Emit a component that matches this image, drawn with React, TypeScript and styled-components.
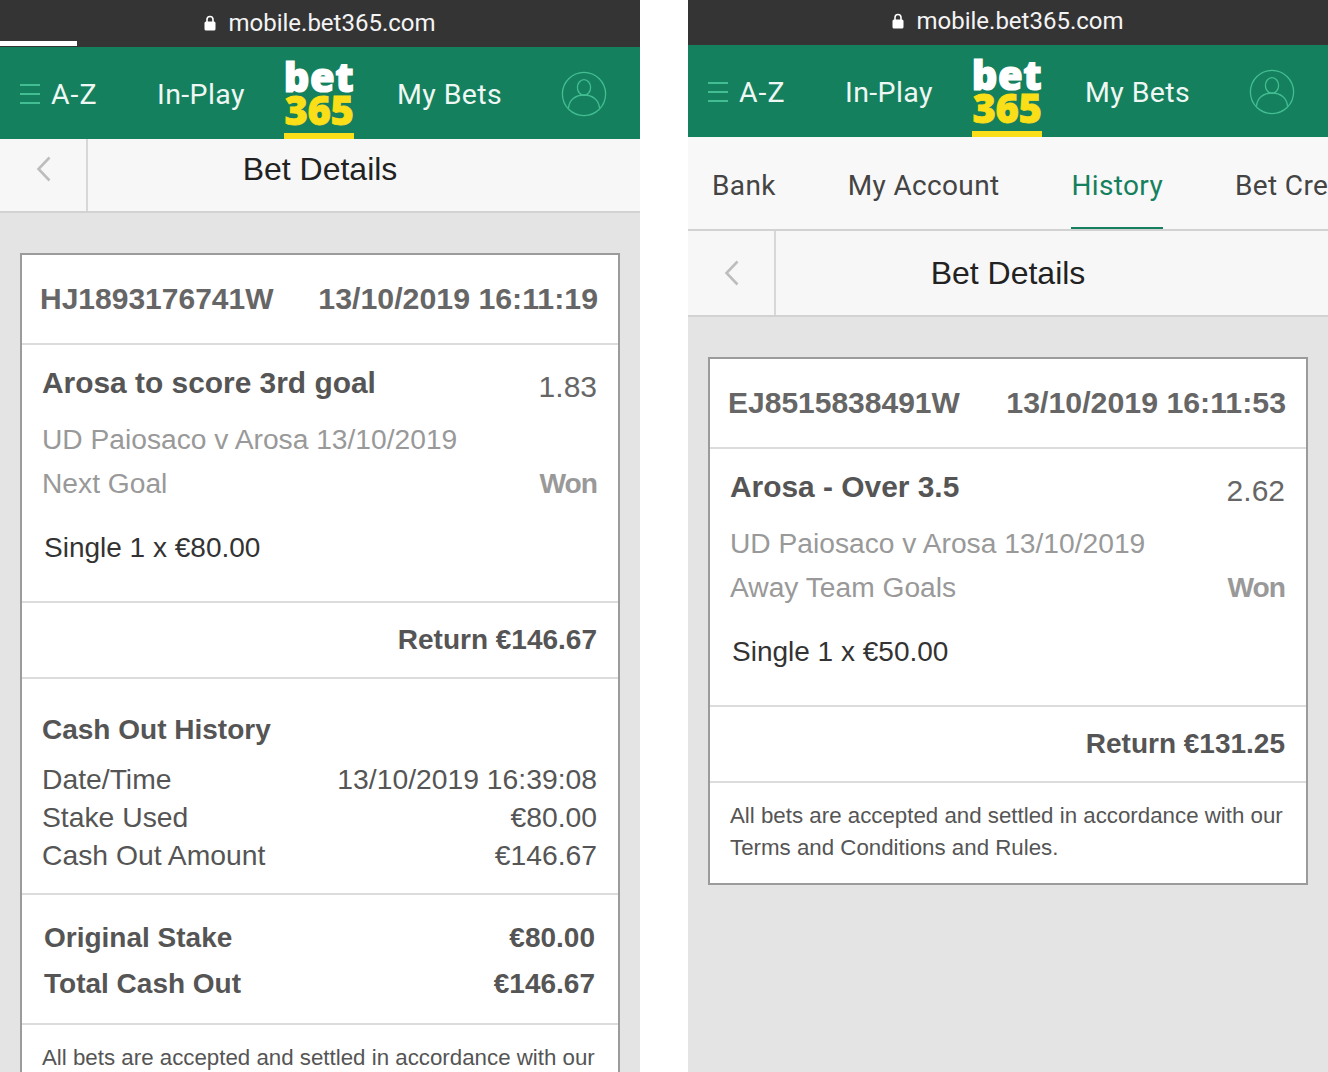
import React from "react"
import styled, { createGlobalStyle } from "styled-components"

const GlobalStyle = createGlobalStyle`
    html, body {
        margin: 0;
        padding: 0;
        background: #ffffff;
    }
    body {
        width: 1328px;
        height: 1072px;
        overflow: hidden;
        font-family: "Liberation Sans", Arial, sans-serif;
    }
`

type Row = { label: string; value: string }

type BetProps = {
    barHeight: number
    progress?: boolean
    tabs?: boolean
    betId: string
    placed: string
    title: string
    odds: string
    market: string
    stake: string
    returned: string
    history?: Row[]
    totals?: Row[]
}

const Lock = () => (
    <svg width="12" height="16" viewBox="0 0 12 16">
        <path d="M3 7V4.500a3 3 0 0 1 6 0V7" fill="none" stroke="#fff" strokeWidth="1.6" />
        <rect x="0.5" y="6.5" width="11" height="9" rx="1.5" fill="#fff" />
    </svg>
)

const Avatar = () => (
    <AvatarIcon width="46" height="46" viewBox="0 0 46 46" fill="none" stroke="#43bd92" strokeWidth="1.3">
        <ellipse cx="23" cy="23" rx="21.6" ry="21.6" />
        <ellipse cx="23" cy="16.5" rx="6.6" ry="7.8" />
        <path d="M7.500 37c.6-8 7-13 15.500-13s14.900 5 15.500 13" />
    </AvatarIcon>
)

const Chevron = () => (
    <svg width="15" height="26" viewBox="0 0 15 26" fill="none" stroke="#bdbdbd" strokeWidth="2.6">
        <path d="M13.500 1.500 2.500 13l11 11.500" />
    </svg>
)

const PhoneView = ({
    barHeight, progress, tabs, betId, placed, title, odds, market, stake, returned, history, totals,
}: BetProps) => {
    return (
        <Phone>
            <UrlBar $height={barHeight} $loading={!!progress}>
                <Lock />
                <UrlText>mobile.bet365.com</UrlText>
                {progress ? <Progress /> : null}
            </UrlBar>
            <Nav>
                <NavAz>
                    <Burger><i /><i /><i /></Burger>
                    A-Z
                </NavAz>
                <NavItem>In-Play</NavItem>
                <Logo>
                    <LogoBet>bet</LogoBet>
                    <LogoNum>365</LogoNum>
                </Logo>
                <NavItem>My Bets</NavItem>
                <Avatar />
            </Nav>
            {tabs ? (
                <Tabs>
                    <Tab>Bank</Tab>
                    <Tab>My Account</Tab>
                    <Tab $active>History</Tab>
                    <Tab>Bet Credits</Tab>
                </Tabs>
            ) : null}
            <SubHead $tall={!!tabs}>
                <BackCell $tall={!!tabs}><Chevron /></BackCell>
                <SubTitle $tall={!!tabs}>Bet Details</SubTitle>
            </SubHead>
            <Card>
                <CardHead>
                    <span>{betId}</span>
                    <PlacedAt>{placed}</PlacedAt>
                </CardHead>
                <Selection>
                    <TitleRow>
                        <BetTitle>{title}</BetTitle>
                        <Odds>{odds}</Odds>
                    </TitleRow>
                    <MatchLine>
                        <span>UD Paiosaco v Arosa 13/10/2019</span>
                    </MatchLine>
                    <MatchLine>
                        <span>{market}</span>
                        <Won>Won</Won>
                    </MatchLine>
                    <Stake>Single 1 x {stake}</Stake>
                </Selection>
                <ReturnRow>Return {returned}</ReturnRow>
                {history ? (
                    <History>
                        <HistoryTitle>Cash Out History</HistoryTitle>
                        {history.map((r) => (
                            <HistoryRow key={r.label}>
                                <span>{r.label}</span>
                                <span>{r.value}</span>
                            </HistoryRow>
                        ))}
                    </History>
                ) : null}
                {totals ? (
                    <Totals>
                        {totals.map((r) => (
                            <TotalRow key={r.label}>
                                <span>{r.label}</span>
                                <span>{r.value}</span>
                            </TotalRow>
                        ))}
                    </Totals>
                ) : null}
                <Terms>
                    All bets are accepted and settled in accordance with our Terms and Conditions and Rules.
                </Terms>
            </Card>
        </Phone>
    )
}

const App = () => {
    return (
        <Page>
            <GlobalStyle />
            <PhoneView
                barHeight={47}
                progress
                betId="HJ1893176741W"
                placed="13/10/2019 16:11:19"
                title="Arosa to score 3rd goal"
                odds="1.83"
                market="Next Goal"
                stake="€80.00"
                returned="€146.67"
                history={[
                    { label: "Date/Time", value: "13/10/2019 16:39:08" },
                    { label: "Stake Used", value: "€80.00" },
                    { label: "Cash Out Amount", value: "€146.67" },
                ]}
                totals={[
                    { label: "Original Stake", value: "€80.00" },
                    { label: "Total Cash Out", value: "€146.67" },
                ]}
            />
            <PhoneView
                barHeight={45}
                tabs
                betId="EJ8515838491W"
                placed="13/10/2019 16:11:53"
                title="Arosa - Over 3.5"
                odds="2.62"
                market="Away Team Goals"
                stake="€50.00"
                returned="€131.25"
            />
        </Page>
    )
}

const Page = styled.div`
    display: flex;
    gap: 48px;
    width: 1328px;
    height: 1072px;
    overflow: hidden;
`
const Phone = styled.div`
    display: flex;
    flex-direction: column;
    width: 640px;
    height: 1072px;
    overflow: hidden;
    background-color: #e4e4e4;
`
const UrlBar = styled.div<{ $height: number; $loading: boolean }>`
    position: relative;
    display: flex;
    align-items: center;
    justify-content: center;
    gap: 12px;
    flex: none;
    height: ${(p) => p.$height}px;
    box-sizing: border-box;
    padding-bottom: ${(p) => (p.$loading ? 1 : 3)}px;
    background-color: #343434;
`
const UrlText = styled.span`
    font-family: Roboto, sans-serif;
    font-size: 24px;
    color: #f4f4f4;
`
const Progress = styled.div`
    position: absolute;
    left: 0;
    bottom: 1px;
    width: 77px;
    height: 5px;
    background-color: #ffffff;
`
const Nav = styled.div`
    display: grid;
    grid-template-columns: 157px 127px 113px 164px 1fr;
    align-items: center;
    flex: none;
    height: 92px;
    background-color: #15805e;
`
const NavItem = styled.div`
    padding-top: 2px;
    font-family: Roboto, sans-serif;
    font-size: 28.5px;
    letter-spacing: 0.4px;
    color: #eef7f3;
`
const NavAz = styled(NavItem)`
    display: flex;
    align-items: center;
    gap: 11px;
    padding-left: 20px;
    letter-spacing: 1px;
`
const Burger = styled.div`
    display: flex;
    flex-direction: column;
    gap: 7px;
    width: 20px;

    i {
        display: block;
        height: 2px;
        background-color: #43bd92;
    }
`
const AvatarIcon = styled.svg`
    margin-top: 2px;
`
const Logo = styled.div`
    display: flex;
    flex-direction: column;
    align-items: center;
    align-self: stretch;
    width: 70px;
    padding-top: 13px;
    box-sizing: border-box;
    border-bottom: 6px solid #fadf18;
    font-family: "Noto Sans", sans-serif;
    font-weight: 900;
`
const LogoBet = styled.div`
    height: 33px;
    font-size: 40px;
    line-height: 33px;
    letter-spacing: 0.6px;
    color: #ffffff;
    -webkit-text-stroke: 1.2px #ffffff;
`
const LogoNum = styled.div`
    height: 33px;
    font-size: 40px;
    line-height: 33px;
    letter-spacing: -0.5px;
    color: #fadf18;
    -webkit-text-stroke: 0.8px #fadf18;
`
const Tabs = styled.div`
    display: flex;
    gap: 72px;
    flex: none;
    height: 94px;
    box-sizing: border-box;
    padding-left: 24px;
    overflow: hidden;
    white-space: nowrap;
    background-color: #f8f8f8;
    border-bottom: 2px solid #d2d2d2;
`
const Tab = styled.div<{ $active?: boolean }>`
    height: 92px;
    box-sizing: border-box;
    font-family: Roboto, sans-serif;
    font-size: 28px;
    line-height: 98px;
    letter-spacing: 0.35px;
    color: ${(p) => (p.$active ? "#15805e" : "#444444")};
    border-bottom: 2px solid ${(p) => (p.$active ? "#15805e" : "transparent")};
`
const SubHead = styled.div<{ $tall: boolean }>`
    display: grid;
    grid-template-columns: 88px 1fr 88px;
    flex: none;
    height: ${(p) => (p.$tall ? 84 : 72)}px;
    background-color: #f7f7f7;
    border-bottom: 2px solid #d2d2d2;
`
const BackCell = styled.div<{ $tall: boolean }>`
    display: flex;
    align-items: center;
    justify-content: center;
    padding-bottom: ${(p) => (p.$tall ? 0 : 12)}px;
    box-sizing: border-box;
    border-right: 2px solid #d8d8d8;
`
const SubTitle = styled.div<{ $tall: boolean }>`
    display: flex;
    align-items: center;
    justify-content: center;
    font-size: 32px;
    color: #222222;
    padding-bottom: ${(p) => (p.$tall ? 0 : 12)}px;
`
const Card = styled.div`
    flex: none;
    margin: 40px 20px 0;
    border: 2px solid #9b9b9b;
    background-color: #ffffff;
`
const CardHead = styled.div`
    display: flex;
    align-items: center;
    justify-content: space-between;
    height: 88px;
    padding: 0 20px 0 18px;
    font-size: 30px;
    font-weight: bold;
    color: #666666;
    border-bottom: 2px solid #dcdcdc;
`
const PlacedAt = styled.span`
    font-size: 30.3px;
`
const Selection = styled.div`
    height: 258px;
    box-sizing: border-box;
    padding: 21px 21px 0 20px;
    border-bottom: 2px solid #dcdcdc;
`
const TitleRow = styled.div`
    display: flex;
    justify-content: space-between;
    height: 51px;
    line-height: 34px;
`
const BetTitle = styled.span`
    font-size: 29.9px;
    font-weight: bold;
    color: #555555;
`
const Odds = styled.span`
    padding-top: 4px;
    font-size: 30px;
    color: #666666;
`
const MatchLine = styled.div`
    display: flex;
    justify-content: space-between;
    font-size: 28.2px;
    line-height: 44px;
    color: #999999;
`
const Won = styled.span`
    font-weight: bold;
    letter-spacing: -1px;
`
const Stake = styled.div`
    margin-top: 21px;
    padding-left: 2px;
    font-size: 28px;
    line-height: 44px;
    color: #333333;
`
const ReturnRow = styled.div`
    height: 74px;
    padding-right: 21px;
    text-align: right;
    font-size: 28px;
    font-weight: bold;
    line-height: 74px;
    color: #555555;
    border-bottom: 2px solid #dcdcdc;
`
const History = styled.div`
    height: 216px;
    box-sizing: border-box;
    padding: 30px 21px 0 20px;
    border-bottom: 2px solid #dcdcdc;
`
const HistoryTitle = styled.div`
    height: 51px;
    font-size: 28px;
    font-weight: bold;
    line-height: 42px;
    color: #555555;
`
const HistoryRow = styled.div`
    display: flex;
    justify-content: space-between;
    font-size: 28.3px;
    line-height: 38px;
    color: #555555;
`
const Totals = styled.div`
    display: flex;
    flex-direction: column;
    gap: 2px;
    height: 130px;
    box-sizing: border-box;
    padding: 21px 23px 0 22px;
    border-bottom: 2px solid #dcdcdc;
`
const TotalRow = styled.div`
    display: flex;
    justify-content: space-between;
    font-size: 28px;
    font-weight: bold;
    line-height: 44px;
    color: #555555;
`
const Terms = styled.div`
    padding: 17px 20px 19px;
    font-size: 22.3px;
    line-height: 32px;
    color: #555555;
`

export default App
